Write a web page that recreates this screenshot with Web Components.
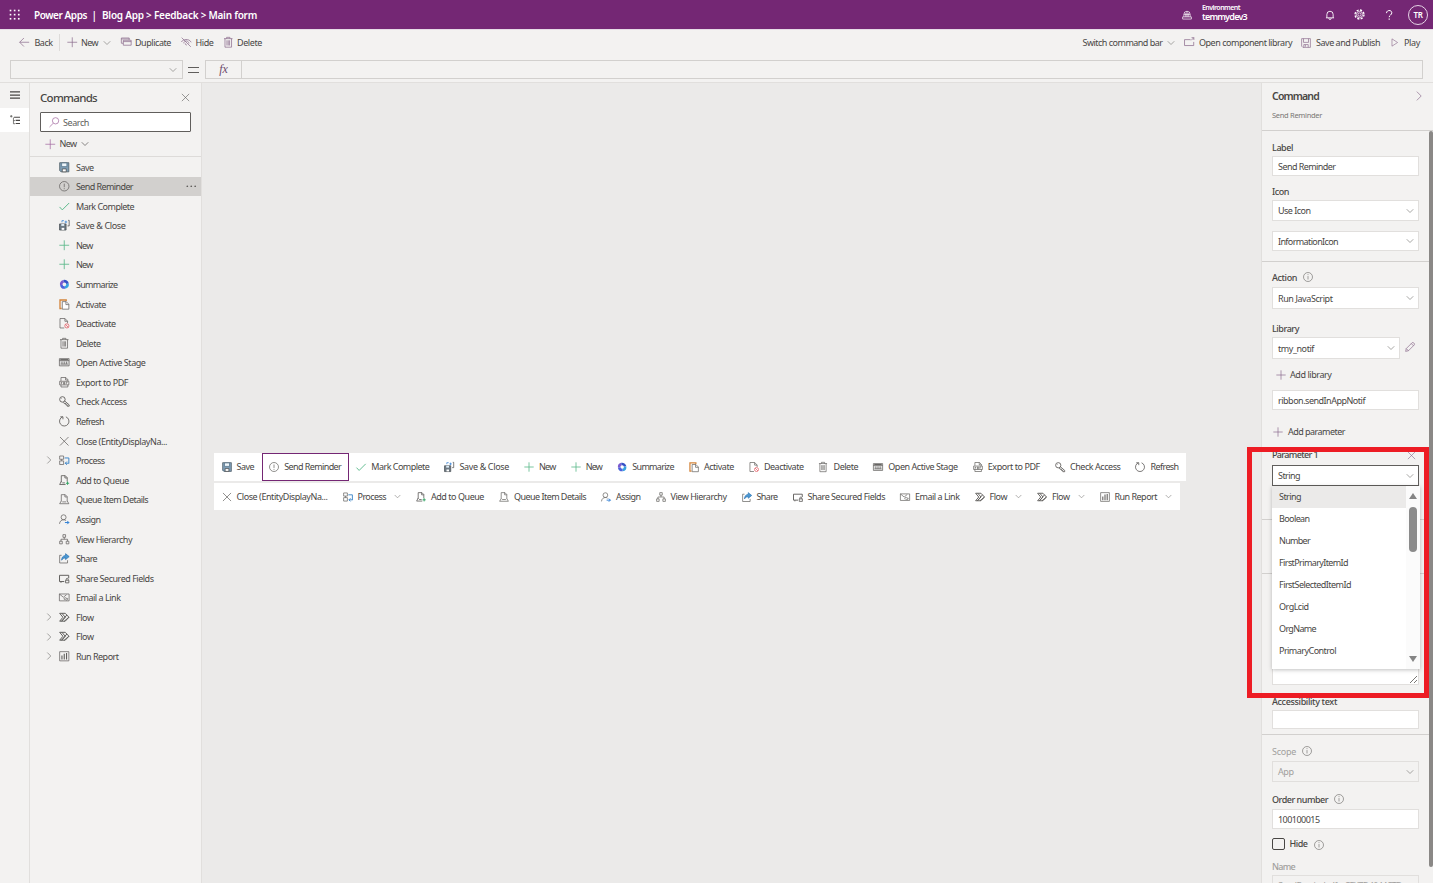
<!DOCTYPE html>
<html lang="en">
<head>
<meta charset="utf-8">
<title>Power Apps</title>
<style>
  html, body { margin: 0; height: 100%; overflow: hidden; }
  body { font: 9px/12px "Noto Sans", "Open Sans", sans-serif; color: #484644; background: #f3f2f1; }
</style>
</head>
<body>
<command-designer></command-designer>

<script>
// 16x16 glyphs, drawn with the current colour unless a colour is part of the icon
const ICONS = {
  waffle: '<g fill="currentColor" stroke="none">' + [1, 7, 13].map(y => [1, 7, 13].map(x => `<rect x="${x}" y="${y}" width="2.4" height="2.4"/>`).join('')).join('') + '</g>',
  back: '<path d="M15.5 8H1M7.5 1.5L1 8l6.500 6.500"/>',
  plus: '<path d="M8 .5v15M.5 8h15"/>',
  down: '<path d="M1.500 4.500L8 11l6.500-6.500" stroke-width="1.5"/>',
  right: '<path d="M4.500 1l7 7-7 7"/>',
  close: '<path d="M1.500 1.500l13 13M14.500 1.500l-13 13"/>',
  duplicate: '<path d="M3.500 9.500h-3v-8h12v3M3.500 5h12v7.500h-12zM3.500 7h12M.5 3h12"/>',
  hide: '<path d="M1 1l14 14M.5 7.500C3 3.500 12 1.500 15.500 8M4 9.500c.5-2 2-3.500 4-3.500 2.500 0 4 2 4 4M6.500 9.500a2 2 0 0 0 2.500 2.500"/>',
  trash: '<path d="M1.500 2.500h13M5.500 2.500v-2h5v2M3 2.500v13h10v-13M6 5v8M8 5v8M10 5v8"/>',
  library: '<path d="M10 4H.8v9h14V7.500M11 5l4-4M11.500 1H15v3.500"/>',
  floppy: '<path d="M1 1h14v14H3l-2-2zM4 1v6h8V1M4.500 15v-4.500h7V15M7 11v3"/>',
  play: '<path d="M3.500 1.500l10 6.500-10 6.500z"/>',
  hamburger: '<path d="M0 3h16M0 8h16M0 13h16" stroke-width="2"/>',
  tree: '<path d="M0 2h4M2 0v4M5.500 4v10H8M5.500 9H8" /><path d="M6.500 3.500H16M9 8.500h7M9 13.500h7" stroke-width="1.8"/>',
  search: '<circle cx="10" cy="5.800" r="4.800"/><path d="M6.500 9.500L.8 15.200"/>',
  bell: '<path d="M3 12.500V7a5 5 0 0 1 10 0v5.500M1.500 12.500h13M6 13c0 3 4 3 4 0" stroke-width="1.4"/>',
  gear: '<circle cx="8" cy="8" r="2.300"/><circle cx="8" cy="8" r="4.600"/><circle cx="8" cy="8" r="6.500" stroke-width="2" stroke-dasharray="3.100 2"/>',
  help: '<path d="M4 5c0-5.500 8.500-5.500 8.500-.5 0 3.500-4.200 3.500-4.200 7" stroke-width="1.600"/><path d="M8.300 13.500v2" stroke-width="1.800"/>',
  globe: '<path d="M3 11V7a5 5 0 0 1 10 0v4M6 11V5M10 11V5M8 2v9M3 7h10M1 11h14v3.500H1z"/>',
  save: '<path d="M1 1h14v14H3l-2-2z" fill="#7e9db5" stroke="#47565f"/><path d="M4 1.500h8V7H4z" fill="#eef5fa" stroke="#4f6f86"/><path d="M5 15v-4.500h6V15z" fill="#fff" stroke="#444"/>',
  info: '<circle cx="8" cy="8" r="7.200"/><path d="M8 4v5.500M8 11v1.500"/>',
  check: '<path d="M.8 9l4.200 4.500L15.500 3" stroke="#5bb98b" stroke-width="1.500"/>',
  saveClose: '<path d="M.8 6h10v9.300h-10z" fill="#6e7a84" stroke="#464d52"/><path d="M3.500 6h4.500v3H3.500z" fill="#dcecf7" stroke="none"/><path d="M4 12h4v3H4z" fill="#fff" stroke="none"/><path d="M4.500 3.500V1h3M8.500 3h4M10.500 1v4" stroke="#2b7cd3"/><path d="M14 .5h1.500V9H13" stroke="#444"/>',
  add: '<path d="M8 .5v15M.5 8h15" stroke="#5bb98b" stroke-width="1.300"/>',
  copilot: '<g stroke-width="4"><path d="M3.500 9A5 5 0 0 1 7 3.300" stroke="#7a5bd0"/><path d="M7 3.300a5 5 0 0 1 6 4" stroke="#3451c6"/><path d="M13 7.300a5 5 0 0 1-4 5.600" stroke="#36a3e0"/><path d="M9 12.900A5 5 0 0 1 3.500 9" stroke="#4b63dc"/></g>',
  activate: '<path d="M4 14.500H1.500V1.500H11V3" stroke="#d4853b" stroke-width="2"/><path d="M5 4h6l4 4v7.500H5z" fill="#fff"/><path d="M10.500 4v4.500H15"/>',
  deactivate: '<path d="M8 15.200H1.500V.8H9l4 4V8M9 .8V5h4"/><circle cx="12" cy="12" r="3.200" stroke="#e0525a"/><path d="M9.800 9.800l4.400 4.400" stroke="#e0525a"/>',
  stage: '<path d="M.6 2.500h14.800v11H.6z" fill="#ddd"/><path d="M.6 5.500h14.800M4.500 7v3.500M8 7v3.500M11.500 7v3.500M2.500 10.800h11" /><path d="M2 4h12" stroke-width="1.500"/>',
  pdf: '<path d="M3 6V.8h7.500L13.500 4v2M10 1v3.500h3.500M1 6.500h14V12H1zM3 12v3.200h10.500V12M3.500 8v3M3.500 8.500H5M7 8v3h1.500V8zM11 11V8h2"/>',
  key: '<g stroke-width="1.400"><circle cx="5.200" cy="5.200" r="4.200"/><path d="M8.500 7.500l7 6v2h-3v-2h-2v-2h-2.500l-1-2"/></g><path d="M3.800 3.800l.8.8"/>',
  refresh: '<path d="M5.500 1.300A7.200 7.200 0 1 0 10.500 1.300M2 1.200h4v3.800" stroke-width="1.300"/>',
  cancel: '<path d="M1.500 1.500l13 13M14.500 1.500l-13 13"/>',
  process: '<path d="M1 1.500h6v5H1zM1 9h6v5.500H1zM4 6.500V9"/><path d="M8.500 4.500H15v8.500M12 10l-2.500 2.500L12 15M9.500 12.500H15" stroke="#3f87c9" stroke-width="1.500"/>',
  queueAdd: '<path d="M3.500 11V1h6l3 3v6M9 1v3.500h3.500M3.500 9.500L1 14.500h9M5 12h4" stroke-width="1.300"/><path d="M13 10v5M10.500 12.500h5" stroke="#36a566" stroke-width="1.600"/>',
  queue: '<path d="M3.500 11V1h6l3 3v7M9 1v3.500h3.500M3.500 10.500L1 14.800h14l-2.500-4.300M5 12h6"/>',
  assign: '<circle cx="7" cy="5" r="3.800"/><path d="M.8 15c.3-4 3-6.200 6.200-6.200 1.500 0 2.500.4 3.500 1.200"/><path d="M9 13h6M12.500 10.500L15 13l-2.500 2.500" stroke="#2b7cd3" stroke-width="1.500"/>',
  hierarchy: '<path d="M6 1h4v4H6zM1 11h4v4H1zM11 11h4v4h-4zM8 5v3M3 11V8h10v3"/>',
  share: '<path d="M4 3.500H1v11.700h12V11"/><path d="M10 1l5.500 4.500L10 10V7.500c-3 0-4.500 1-6 3.500 0-4 2-7 6-7.200z" fill="#4a97d2" stroke="#2b74b3"/>',
  shareLock: '<path d="M8 13H.8V3.500h14V8" stroke-width="1.500"/><path d="M10 11h5v4h-5zM11 11V9.500c0-2 3-2 3 0V11M3 13v2" stroke-width="1.300"/>',
  email: '<path d="M.6 3h14.800v10.500H.6zM.6 3l6 5 5-4"/><path d="M8.500 12c-2-2 0-4 2-3l2 1.500M9.500 11c2 3 5 0 3-2"/>',
  flow: '<g stroke-width="1.500"><path d="M1 2h8.500L15.200 8l-5.700 6H1l5-6z"/><path d="M4.500 2l5 6-5.500 6M12 4.500L4 14M15 8L8 14"/></g>',
  report: '<path d="M1 1h14v14H1z"/><path d="M4.500 13V7M8 13V4M11.500 13V3" stroke-width="1.700"/>',
  pencil: '<path d="M1 15l1-4.500L11.500 1c1.500-1 4.500 1.500 3.500 3.500L5.500 14zM10 2.500L13.500 6M2 10.500L5.500 14"/>',
  more: '<g fill="currentColor" stroke="none"><circle cx="2" cy="8" r="1.300"/><circle cx="8" cy="8" r="1.300"/><circle cx="14" cy="8" r="1.300"/></g>'
}

customElements.define('app-icon', class extends HTMLElement {
  connectedCallback() {
    const size = this.getAttribute('size') || 10.5
    this.attachShadow({ mode: 'open' }).innerHTML = `
      <style>
        :host { display: inline-flex; flex: none; width: ${size}px; height: ${size}px; }
        svg { width: 100%; height: 100%; overflow: visible; }
      </style>
      <svg viewBox="0 0 16 16" fill="none" stroke="currentColor" stroke-width="1.1">${ICONS[this.getAttribute('name')]}</svg>`
  }
})

// Text run that tracks its letters so that it takes exactly w pixels
customElements.define('fit-text', class extends HTMLElement {
  connectedCallback() {
    // no whitespace around the slot: white-space is pre here
    this.attachShadow({ mode: 'open' }).innerHTML = '<style>:host { display: inline-block; flex: none; white-space: pre; }</style><slot></slot>'
    const w = +this.getAttribute('w')
    const natural = this.getBoundingClientRect().width
    if (w && natural) this.style.letterSpacing = (w - natural) / this.textContent.length + 'px'
    if (w) this.style.width = w + 'px'
  }
})

customElements.define('top-bar', class extends HTMLElement {
  connectedCallback() {
    this.attachShadow({ mode: 'open' }).innerHTML = `
      <style>
        :host { display: flex; align-items: center; height: 29px; box-sizing: border-box; padding: 0 5px 0 9px;
          background: #742774; color: #fff; font-size: 10px; font-weight: 600; }
        .title { display: flex; margin-left: 14px; flex: 1; }
        .title span { margin: 0 5px 0 4.5px; }
        .env { display: flex; flex-direction: column; align-items: flex-start; margin-left: 10px; width: 123px; margin-top: -4px; }
        .env fit-text:first-child { font-size: 7px; line-height: 8px; }
        .env fit-text:last-child { font-size: 9px; line-height: 10px; }
        .user { display: grid; place-items: center; width: 18px; height: 18px; border: 1px solid #e5d3e5; border-radius: 50%; font-size: 8px; margin-left: 14px; }
      </style>
      <app-icon name="waffle" size="11"></app-icon>
      <div class="title"><fit-text w="53">Power Apps</fit-text><span>|</span><fit-text w="155">Blog App &gt; Feedback &gt; Main form</fit-text></div>
      <app-icon name="globe" size="10"></app-icon>
      <div class="env"><fit-text w="38">Environment</fit-text><fit-text w="45">temmydev3</fit-text></div>
      <app-icon name="bell" size="10"></app-icon>
      <app-icon name="gear" size="11" style="margin-left:19px"></app-icon>
      <app-icon name="help" size="10" style="margin-left:19px"></app-icon>
      <div class="user"><fit-text w="9">TR</fit-text></div>`
  }
})

customElements.define('tool-bar', class extends HTMLElement {
  connectedCallback() {
    this.attachShadow({ mode: 'open' }).innerHTML = `
      <style>
        :host { display: flex; align-items: center; height: 28px; box-sizing: border-box; padding: 0 13px 2px 19px; border-top: 1px solid #e6dbe6; }
        app-icon { color: #8a6a8c; }
        app-icon[name=down] { color: #8a8886; }
        .rule { width: 1px; height: 17px; background: #dddbd9; margin: 0 7px 0 6px; }
        .gap { flex: 1; }
      </style>
      <app-icon name="back"></app-icon><fit-text w="18" style="margin-left:5px">Back</fit-text>
      <span class="rule"></span>
      <app-icon name="plus"></app-icon><fit-text w="17" style="margin-left:4px">New</fit-text>
      <app-icon name="down" size="8" style="margin-left:5px"></app-icon>
      <app-icon name="duplicate" style="margin-left:9.5px"></app-icon><fit-text w="36" style="margin-left:4px">Duplicate</fit-text>
      <app-icon name="hide" style="margin-left:10px"></app-icon><fit-text w="18" style="margin-left:4px">Hide</fit-text>
      <app-icon name="trash" style="margin-left:9px"></app-icon><fit-text w="25" style="margin-left:4px">Delete</fit-text>
      <span class="gap"></span>
      <fit-text w="80">Switch command bar</fit-text><app-icon name="down" size="8" style="margin-left:4px"></app-icon>
      <app-icon name="library" style="margin-left:9px"></app-icon><fit-text w="93" style="margin-left:5px">Open component library</fit-text>
      <app-icon name="floppy" size="10" style="margin-left:9px"></app-icon><fit-text w="64" style="margin-left:5px">Save and Publish</fit-text>
      <app-icon name="play" size="9" style="margin-left:10px"></app-icon><fit-text w="16" style="margin-left:5px">Play</fit-text>`
  }
})

customElements.define('formula-bar', class extends HTMLElement {
  connectedCallback() {
    this.attachShadow({ mode: 'open' }).innerHTML = `
      <style>
        :host { display: flex; align-items: center; height: 26px; padding: 0 10px; box-sizing: border-box; border-bottom: 1px solid #e1dfdd; }
        .box { box-sizing: border-box; height: 19px; border: 1px solid #d2d0ce; display: flex; align-items: center; }
        .name { width: 173px; justify-content: flex-end; padding-right: 5px; color: #8a8886; }
        .eq { width: 11px; height: 4px; margin: 0 6px 0 5px; border: solid #605e5c; border-width: 1px 0; }
        .fx { width: 37px; justify-content: center; font: italic 12px "Liberation Serif", serif; color: #6b4a6d; }
        .input { flex: 1; border-left: 0; }
      </style>
      <div class="box name"><app-icon name="down" size="8"></app-icon></div>
      <div class="eq"></div>
      <div class="box fx">fx</div>
      <div class="box input"></div>`
  }
})

// name, icon, text width, expandable
const COMMANDS = [
  ['Save', 'save', 17.5], ['Send Reminder', 'info', 57], ['Mark Complete', 'check', 58], ['Save & Close', 'saveClose', 49.5],
  ['New', 'add', 16.5], ['New', 'add', 16.5], ['Summarize', 'copilot', 41.5], ['Activate', 'activate', 30],
  ['Deactivate', 'deactivate', 39.5], ['Delete', 'trash', 24.5], ['Open Active Stage', 'stage', 69.5], ['Export to PDF', 'pdf', 52],
  ['Check Access', 'key', 50.5], ['Refresh', 'refresh', 28], ['Close (EntityDisplayNa...', 'cancel', 91], ['Process', 'process', 28.5, true],
  ['Add to Queue', 'queueAdd', 53], ['Queue Item Details', 'queue', 72], ['Assign', 'assign', 24.5], ['View Hierarchy', 'hierarchy', 56],
  ['Share', 'share', 21], ['Share Secured Fields', 'shareLock', 77.5], ['Email a Link', 'email', 44.5], ['Flow', 'flow', 17.5, true],
  ['Flow', 'flow', 17.5, true], ['Run Report', 'report', 42.5, true]
]

customElements.define('command-tree', class extends HTMLElement {
  connectedCallback() {
    this.attachShadow({ mode: 'open' }).innerHTML = `
      <style>
        :host { display: block; width: 171px; border: solid #e1dfdd; border-width: 0 1px; box-sizing: content-box; }
        .head { display: flex; align-items: center; justify-content: space-between; height: 29px; padding: 0 11px 0 10px; font-size: 11.5px; font-weight: 500; }
        .search { display: flex; align-items: center; gap: 3.5px; height: 18px; margin: 0 10px; padding-left: 8px; border: 1px solid #605e5c; border-radius: 1px; background: #fff; color: #605e5c; }
        .search fit-text { padding-top: 1px; }
        .search app-icon, .new app-icon:first-child { color: #a2679f; }
        .new { display: flex; align-items: center; height: 24px; padding-left: 15px; border-bottom: 1px solid #dddbd9; }
        ul { list-style: none; margin: 0; padding: 0; }
        li { display: flex; align-items: center; height: 19.58px; }
        li .twist { width: 29px; display: flex; justify-content: center; box-sizing: border-box; padding-left: 8px; color: #8a8886; }
        li fit-text { margin-left: 6.5px; padding-top: 1.5px; }
        li.on { background: #d2d0ce; }
        li.on app-icon[name=more] { margin-left: auto; margin-right: 5px; }
        app-icon { color: #605e5c; }
      </style>
      <div class="head"><fit-text w="57">Commands</fit-text><app-icon name="close" size="9"></app-icon></div>
      <div class="search"><app-icon name="search"></app-icon><fit-text w="26">Search</fit-text></div>
      <div class="new"><app-icon name="plus"></app-icon><fit-text w="17" style="margin-left:4px">New</fit-text><app-icon name="down" size="8" style="margin-left:4px"></app-icon></div>
      <ul>${COMMANDS.map(([label, icon, w, menu], i) => `
        <li class="${i == 1 ? 'on' : ''}">
          <span class="twist">${menu ? '<app-icon name="right" size="8"></app-icon>' : ''}</span>
          <app-icon name="${icon}"></app-icon><fit-text w="${w}">${label.replace('&', '&amp;')}</fit-text>
          ${i == 1 ? '<app-icon name="more"></app-icon>' : ''}
        </li>`).join('')}
      </ul>`
  }
})

customElements.define('command-ribbon', class extends HTMLElement {
  connectedCallback() {
    const item = ([label, icon, w, menu], i) => `
      <div class="item ${i == 1 ? 'on' : ''}">
        <app-icon name="${icon}" size="10"></app-icon><fit-text w="${w}">${label.replace('&', '&amp;')}</fit-text>
        ${menu ? '<app-icon class="menu" name="down" size="7"></app-icon>' : ''}
      </div>`
    this.attachShadow({ mode: 'open' }).innerHTML = `
      <style>
        :host { display: flex; flex-direction: column; align-items: flex-start; gap: 2px; }
        .bar { display: flex; background: #fff; height: 27px; }
        .bar:first-of-type { height: 28px; width: 972px; }
        .bar:last-child { width: 966px; }
        .item { display: flex; align-items: center; padding: 0 7.5px; box-sizing: border-box; }
        .item fit-text { margin-left: 5px; }
        .bar:first-of-type fit-text { margin-left: 5.12px; }
        .item.on { border: 1px solid #742774; padding: 0 6.5px; }
        app-icon { color: #605e5c; }
        .menu { margin-left: 8px; color: #8a8886; }
      </style>
      <div class="bar">${COMMANDS.slice(0, 14).map(item).join('')}</div>
      <div class="bar">${COMMANDS.slice(14).map(c => item(c, -1)).join('')}</div>`
  }
})

customElements.define('field-box', class extends HTMLElement {
  connectedCallback() {
    this.attachShadow({ mode: 'open' }).innerHTML = `
      <style>
        :host { display: flex; align-items: center; justify-content: space-between; box-sizing: border-box; height: 20px;
          border: 1px solid #e1dfdd; background: #fff; padding: 1px 4px 0 5px; }
        :host([disabled]) { background: #f3f2f1; color: #a19f9d; }
        :host([active]) { border-color: #605e5c; }
        app-icon { color: #8a8886; margin-top: -1px; }
      </style>
      <slot></slot>${this.hasAttribute('select') ? '<app-icon name="down" size="8"></app-icon>' : ''}`
  }
})

customElements.define('option-list', class extends HTMLElement {
  connectedCallback() {
    const options = [['String', 22], ['Boolean', 30.5], ['Number', 31], ['FirstPrimaryItemId', 69], ['FirstSelectedItemId', 72], ['OrgLcid', 29.5], ['OrgName', 37], ['PrimaryControl', 57]]
    this.attachShadow({ mode: 'open' }).innerHTML = `
      <style>
        :host { display: flex; width: 148px; height: 183px; background: #fff; box-shadow: 0 1px 4px rgba(0, 0, 0, .25); }
        .list { flex: 1; }
        .list div { height: 22px; display: flex; align-items: center; padding-left: 7px; }
        .list div:first-child { background: #ebeae9; }
        .scroll { width: 14px; background: #fbfbfb; display: flex; flex-direction: column; align-items: center; padding: 7px 0; box-sizing: border-box; }
        .up, .down { border: solid transparent; border-width: 0 4.5px; }
        .up { border-bottom: 6px solid #858585; }
        .down { border-top: 6px solid #858585; margin-top: auto; }
        .thumb { width: 8px; height: 45px; margin-top: 8px; border-radius: 4px; background: #8b8b8b; }
      </style>
      <div class="list">${options.map(([label, w]) => `<div><fit-text w="${w}">${label}</fit-text></div>`).join('')}</div>
      <div class="scroll"><div class="up"></div><div class="thumb"></div><div class="down"></div></div>`
  }
})

customElements.define('property-pane', class extends HTMLElement {
  connectedCallback() {
    this.attachShadow({ mode: 'open' }).innerHTML = `
      <style>
        :host { display: flex; flex-direction: column; width: 172px; box-sizing: border-box; border-left: 1px solid #e1dfdd; overflow: hidden; }
        header { height: 48px; box-sizing: border-box; padding: 7px 10px 0; border-bottom: 1px solid #d2d0ce; }
        .row { display: flex; align-items: center; height: 12px; }
        header .row:first-child { justify-content: space-between; font-size: 10.5px; font-weight: 600; }
        header .row + .row { font-size: 7.5px; color: #797775; margin-top: 7px; }
        app-icon { color: #8a6a8c; }
        app-icon[name=info] { color: #797775; margin: -2px 0 0 6px; transform: rotate(180deg); }
        .body { display: flex; flex: 1; min-height: 0; }
        .fields { flex: 1; }
        section { padding: 0 10px; border-bottom: 1px solid #d2d0ce; box-sizing: border-box; width: 167px; }
        section:last-child { border: 0; }
        .label { font-weight: 500; }
        .muted { color: #a19f9d; }
        .bar { width: 4px; height: 736px; background: #8a8886; border-radius: 2px; }
        .anchor { position: relative; }
        option-list { position: absolute; left: 0; top: 21px; z-index: 2; }
        .check { width: 10.5px; height: 10.5px; border: 1px solid #484644; border-radius: 2px; margin-right: 5px; }
        .text { height: 111px; background: #fff; border: 1px solid #e1dfdd; box-sizing: border-box; display: flex; align-items: flex-end; justify-content: flex-end; color: #797775; }
      </style>
      <header>
        <div class="row"><fit-text w="47">Command</fit-text><app-icon name="right" size="10" style="margin-right:-1px"></app-icon></div>
        <div class="row"><fit-text w="50">Send Reminder</fit-text></div>
      </header>
      <div class="body">
        <div class="fields">
          <section style="height:131px; padding-top:11px">
            <div class="row label"><fit-text w="21">Label</fit-text></div>
            <field-box style="margin-top:2px"><fit-text w="57.5">Send Reminder</fit-text></field-box>
            <div class="row label" style="margin-top:10px"><fit-text w="17">Icon</fit-text></div>
            <field-box select style="margin-top:2px; height:21px"><fit-text w="32.5">Use Icon</fit-text></field-box>
            <field-box select style="margin-top:10px"><fit-text w="60">InformationIcon</fit-text></field-box>
          </section>
          <section style="height:258px; padding-top:10px">
            <div class="row label"><fit-text w="25">Action</fit-text><app-icon name="info" size="10"></app-icon></div>
            <field-box select style="margin-top:3px; height:22px"><fit-text w="54.5">Run JavaScript</fit-text></field-box>
            <div class="row label" style="margin-top:14px"><fit-text w="27">Library</fit-text></div>
            <div class="row" style="height:22px; margin-top:2px">
              <field-box select style="width:128px; height:22px"><fit-text w="36">tmy_notif</fit-text></field-box>
              <app-icon name="pencil" size="10" style="margin:-2px 0 0 5px"></app-icon>
            </div>
            <div class="row" style="margin-top:10px; padding-left:4px"><app-icon name="plus" size="10"></app-icon><fit-text w="41.5" style="margin-left:4px">Add library</fit-text></div>
            <field-box style="margin-top:9px"><fit-text w="87">ribbon.sendInAppNotif</fit-text></field-box>
            <div class="row" style="margin-top:16px; padding-left:1px"><app-icon name="plus" size="10"></app-icon><fit-text w="57" style="margin-left:5px">Add parameter</fit-text></div>
            <div class="row label" style="margin-top:11px; justify-content:space-between"><fit-text w="46">Parameter 1</fit-text><app-icon name="close" size="9" style="margin-right:3px"></app-icon></div>
            <div class="anchor" style="margin-top:4px">
              <field-box select active style="height:21px"><fit-text w="22">String</fit-text></field-box>
              <option-list></option-list>
            </div>
          </section>
          <section style="height:54px"></section>
          <section style="height:161px">
            <div class="text"><svg width="9" height="9" viewBox="0 0 9 9" stroke="currentColor" fill="none"><path d="M1 8l7-7M5 8l3-3"/></svg></div>
            <div class="row label" style="margin-top:11px"><fit-text w="65">Accessibility text</fit-text></div>
            <field-box style="margin-top:2px; height:19px"></field-box>
          </section>
          <section style="padding-top:11px">
            <div class="row muted"><fit-text w="24">Scope</fit-text><app-icon name="info" size="10"></app-icon></div>
            <field-box select disabled style="margin-top:3px; height:21px"><fit-text w="15.5">App</fit-text></field-box>
            <div class="row label" style="margin-top:12px"><fit-text w="56">Order number</fit-text><app-icon name="info" size="10"></app-icon></div>
            <field-box style="margin-top:3px"><fit-text w="41.5">100100015</fit-text></field-box>
            <div class="row label" style="margin-top:9px"><span class="check"></span><fit-text w="18">Hide</fit-text><app-icon name="info" size="10" style="margin-top:2px"></app-icon></div>
            <div class="row label muted" style="margin-top:11px"><fit-text w="23">Name</fit-text></div>
            <field-box disabled style="margin-top:2px"><fit-text w="124">SendReminder!for.CFK7D4044CTD</fit-text></field-box>
          </section>
        </div>
        <div class="bar"></div>
      </div>`
  }
})

customElements.define('command-designer', class extends HTMLElement {
  connectedCallback() {
    this.attachShadow({ mode: 'open' }).innerHTML = `
      <style>
        :host { display: flex; flex-direction: column; height: 883px; width: 1433px; position: relative; overflow: hidden; background: #f3f2f1; }
        main { display: flex; flex: 1; min-height: 0; }
        nav { width: 29px; display: flex; flex-direction: column; }
        nav span { height: 24.5px; display: grid; place-items: center; }
        nav .on { background: #fff; }
        .canvas { flex: 1; background: #ebeae9; padding: 370px 0 0 12px; box-sizing: border-box; }
        /* callout drawn over the parameter list */
        .mark { position: absolute; left: 1247px; top: 447px; width: 172px; height: 241px; border: 5px solid #ed1c24; z-index: 3; }
      </style>
      <top-bar></top-bar>
      <tool-bar></tool-bar>
      <formula-bar></formula-bar>
      <main>
        <nav><span><app-icon name="hamburger" size="10"></app-icon></span><span class="on"><app-icon name="tree" size="10"></app-icon></span></nav>
        <command-tree></command-tree>
        <div class="canvas"><command-ribbon></command-ribbon></div>
        <property-pane></property-pane>
      </main>
      <div class="mark"></div>`
  }
})
</script>
</body>
</html>
